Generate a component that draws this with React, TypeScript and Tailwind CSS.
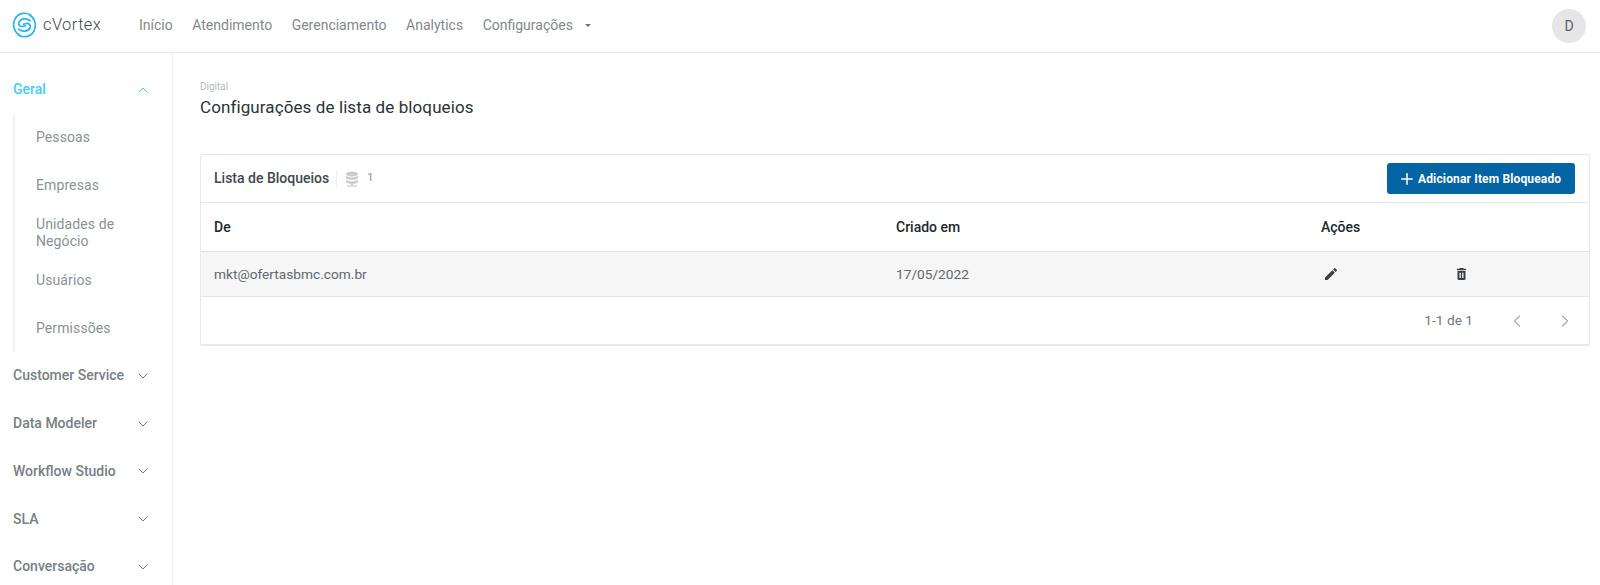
import { ChevronDown, ChevronUp, ChevronLeft, ChevronRight, Plus } from "lucide-react"

const topLinks = ["Início", "Atendimento", "Gerenciamento", "Analytics"]
const subItems = ["Pessoas", "Empresas", "Unidades de Negócio", "Usuários", "Permissões"]
const sections = ["Customer Service", "Data Modeler", "Workflow Studio", "SLA", "Conversação"]

function Logo() {
  return (
    <svg width="25" height="26" viewBox="0 0 24 26" fill="none" stroke="#29b6e8" strokeWidth="1.7" strokeLinecap="round">
      <path d="M18 2.800C12.500-.2 5.500 1.300 2.500 7-.4 13 1.500 20 7 23" />
      <path d="M6 23.200C11.500 26.200 18.500 24.700 21.500 19 24.400 13 22.500 6 17 3" />
      <path d="M17.800 8.800C14.500 5.800 8.500 6.200 6.600 10 5.200 13.200 7.800 15.300 11 14.300L13 13.700" />
      <path d="M6.200 17.200C9.500 20.200 15.500 19.800 17.400 16 18.800 12.800 16.200 10.700 13 11.700L11 12.300" />
    </svg>
  )
}

function Header() {
  return (
    <header className="flex h-[53px] items-center border-b border-[#e8e8e8] pl-[12px] pr-[14px]">
      <div className="flex w-[127px] items-center gap-[6px] pb-[2px]">
        <Logo />
        <span className="text-[16.500px] font-light tracking-[0.4px] text-[#3f494e]">cVortex</span>
      </div>
      <nav className="flex items-center gap-[19.500px] pb-[1px] text-[14px] text-[#83898c]">
        {topLinks.map((link) => (
          <span key={link}>{link}</span>
        ))}
        <span className="flex items-center gap-[12px]">
          Configurações
          <span className="h-0 w-0 border-x-[3px] border-t-[3px] border-x-transparent border-t-[#6b7275]" />
        </span>
      </nav>
      <div className="ml-auto flex h-[34px] w-[34px] items-center justify-center rounded-full bg-[#e6e6e6] text-[14px] text-[#5a6266]">
        D
      </div>
    </header>
  )
}

function Sidebar() {
  return (
    <aside className="h-[532px] w-[173px] shrink-0 overflow-hidden border-r border-[#eeeeee] pl-[13px] pr-[21px] pt-[13px] text-[14px]">
      <div className="flex h-[47.700px] items-center justify-between font-medium text-[#3fcdfb]">
        Geral
        <ChevronUp className="h-[16px] w-[16px] text-[#3fcdfb]" strokeWidth={1.5} />
      </div>
      <div className="border-l-2 border-[#f1f3f3] pl-[21px] text-[#8b9295]">
        {subItems.map((item) => (
          <div key={item} className="flex h-[47.700px] items-center leading-[17px] tracking-[0.1px]">
            {item}
          </div>
        ))}
      </div>
      {sections.map((section) => (
        <div key={section} className="flex h-[47.700px] items-center justify-between font-medium text-[#788083]">
          {section}
          <ChevronDown className="h-[16px] w-[16px]" strokeWidth={1.5} />
        </div>
      ))}
    </aside>
  )
}

function BlockList() {
  return (
    <div className="rounded-[2px] border border-b-2 border-[#e9e9e9] text-[14px]">
      <div className="flex h-[48px] items-center border-b border-[#e9e9e9] pl-[13px] pr-[14px]">
        <span className="pr-[7px] text-[14px] font-medium text-[#3f484d]">Lista de Bloqueios</span>
        <span className="h-[17px] w-px bg-[#eeeeee]" />
        <svg className="ml-[8px]" width="14" height="16" viewBox="0 0 14 16" fill="#c9cccd">
          <ellipse cx="7" cy="3" rx="6" ry="2.500" />
          <path d="M1 4.500c1 1.300 3.500 2 6 2s5-.7 6-2V7c-1 1.300-3.500 2-6 2S2 8.300 1 7z" />
          <path d="M1 8.500c1 1.300 3.500 2 6 2s5-.7 6-2V11c-1 1.300-3.500 2-6 2s-5-.7-6-2z" />
          <rect x="6" y="12.500" width="2" height="2" />
          <rect x="2" y="14.500" width="10" height="1" />
        </svg>
        <span className="ml-[8px] text-[11px] text-[#889094]">1</span>
        <button className="ml-auto flex h-[31px] w-[188px] items-center gap-[2px] rounded-[3px] bg-[#0464a4] pl-[11px] text-[12px] font-bold tracking-[0.15px] text-white">
          <Plus className="h-[18px] w-[18px]" strokeWidth={2} />
          Adicionar Item Bloqueado
        </button>
      </div>
      <div className="grid h-[49px] grid-cols-[682px_425px_130px_1fr] items-center border-b border-[#e4e4e4] pl-[13px] text-[#20282c]">
        <span className="font-medium">De</span>
        <span className="font-medium">Criado em</span>
        <span className="font-medium">Ações</span>
      </div>
      <div className="grid h-[45px] grid-cols-[682px_425px_130px_1fr] items-center border-b border-[#e4e4e4] bg-[#f6f6f6] pl-[13px] text-[13.700px] text-[#5f676b]">
        <span>mkt@ofertasbmc.com.br</span>
        <span>17/05/2022</span>
        <span className="pl-[4px]">
          <svg width="12" height="12" viewBox="3 3 18 18" fill="#394145">
            <path d="M3 17.250V21h3.750L17.810 9.940l-3.750-3.750L3 17.250zM20.710 7.040a1 1 0 0 0 0-1.410l-2.340-2.340a1 1 0 0 0-1.410 0l-1.830 1.830 3.750 3.750 1.830-1.830z" />
          </svg>
        </span>
        <span className="pl-[5px]">
          <svg width="11" height="12" viewBox="4 3 16 18" fill="#394145">
            <path d="M6 19a2 2 0 0 0 2 2h8a2 2 0 0 0 2-2V7H6v12zm3-9h2v8H9v-8zm4 0h2v8h-2v-8zM15.500 4l-1-1h-5l-1 1H5v2h14V4z" />
          </svg>
        </span>
      </div>
      <div className="flex h-[47px] items-center justify-end pr-[14px] text-[13.700px] text-[#6f777a]">
        <span>1-1 de 1</span>
        <ChevronLeft className="ml-[34px] h-[20px] w-[20px] text-[#a9aeb0]" strokeWidth={1.5} />
        <ChevronRight className="ml-[28px] h-[20px] w-[20px] text-[#a9aeb0]" strokeWidth={1.5} />
      </div>
    </div>
  )
}

export default function App() {
  return (
    <div className="h-[585px] overflow-hidden bg-white font-['Roboto',sans-serif]">
      <Header />
      <div className="flex">
        <Sidebar />
        <main className="flex-1 pl-[27px] pr-[10px] pt-[28px]">
          <div className="text-[10px] leading-[12px] text-[#b5b9bb]">Digital</div>
          <h1 className="mt-[2px] text-[17px] leading-[24px] tracking-[0.1px] text-[#2b3337]">
            Configurações de lista de bloqueios
          </h1>
          <div className="mt-[35px]">
            <BlockList />
          </div>
        </main>
      </div>
    </div>
  )
}
